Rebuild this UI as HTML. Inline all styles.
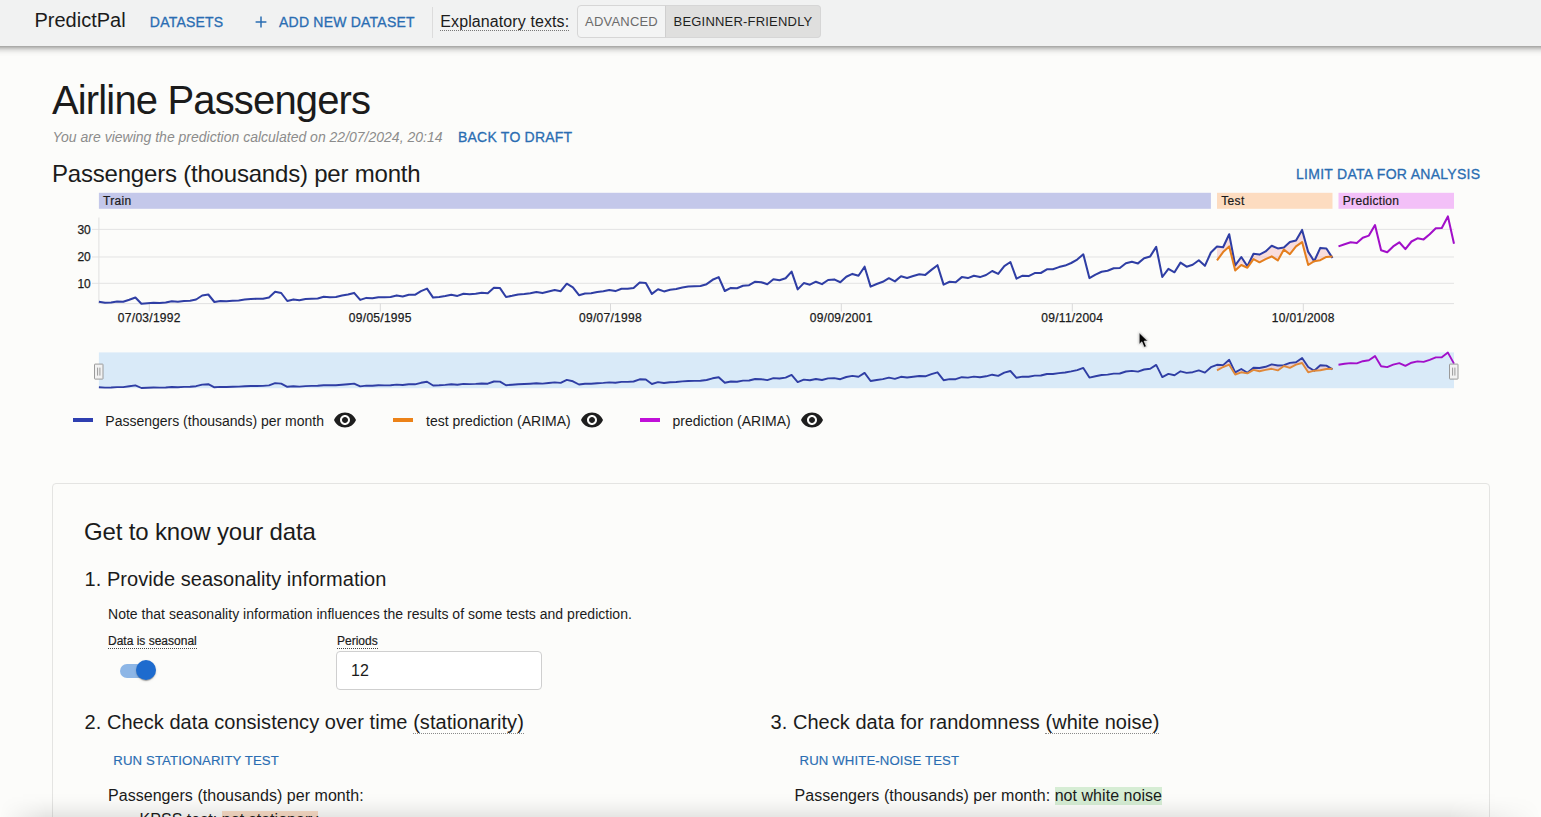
<!DOCTYPE html>
<html lang="en">
<head>
<meta charset="utf-8">
<title>PredictPal - Airline Passengers</title>
<style>
*{box-sizing:border-box;}
html,body{margin:0;padding:0;}
body{width:1541px;height:817px;overflow:hidden;position:relative;background:#fcfcfa;color:#1b1b1b;
 font-family:"Liberation Sans",Arial,Helvetica,sans-serif;}
.abs{position:absolute;white-space:nowrap;line-height:1;}
.hdr{position:absolute;left:-20px;top:0;width:1581px;height:46px;background:#f1f2f2;
 box-shadow:0 2px 4px -1px rgba(0,0,0,.30),0 4px 6px 0 rgba(0,0,0,.14),0 1px 10px 0 rgba(0,0,0,.10);z-index:5;}
.link{color:#2a6db2;-webkit-text-stroke:.3px #2a6db2;}
.brand{left:34.5px;top:10.2px;font-size:20px;color:#1b1b1b;}
.nav{font-size:14px;top:14.5px;letter-spacing:.22px;}
.divider{position:absolute;left:432px;top:7px;width:1px;height:31px;background:#dcdcdc;}
.expl{left:440.3px;top:14px;font-size:16px;letter-spacing:.1px;border-bottom:1px dotted #777;padding-bottom:0px;}
.tgl{position:absolute;top:5px;height:33px;border:1px solid #d6d6d6;font-size:13px;color:#6b6b6b;display:flex;align-items:center;justify-content:center;letter-spacing:.2px;}
.tgl.a{left:577px;width:89px;border-radius:4px 0 0 4px;background:#f3f4f4;}
.tgl.b{left:665px;width:156px;border-radius:0 4px 4px 0;background:#dfdfde;color:#1f1f1f;border-left-color:#cfcfcf;}
h1{margin:0;font-weight:400;}
.title{left:52px;top:79.6px;font-size:40px;letter-spacing:-.85px;}
.sub{left:52.5px;top:129.8px;font-size:14px;font-style:italic;color:#8c8c8c;}
.back{left:458px;top:129.8px;font-size:14px;letter-spacing:.22px;}
.ctitle{left:52px;top:161.7px;font-size:24px;letter-spacing:-.2px;}
.limit{left:1296px;top:166.75px;font-size:14px;letter-spacing:.28px;}
.chart{position:absolute;left:0;top:0;}
.chart text{font-family:"Liberation Sans",Arial,sans-serif;fill:#1b1b1b;}
.chart .tick{font-size:12px;stroke:#1b1b1b;stroke-width:.25px;}
.chart .bandtxt text{font-size:12px;stroke:#1b1b1b;stroke-width:.2px;letter-spacing:.32px;}
.leg{top:413.5px;font-size:14px;}
.sw{position:absolute;top:418.2px;width:20px;height:3.6px;}
.eyew{position:absolute;top:408px;width:24px;height:24px;display:block;}
.eye{display:block;}
.card{position:absolute;left:52px;top:483px;width:1438px;height:400px;border:1px solid #e4e4e2;border-radius:4px;background:#fcfcfa;}
.h2{left:84px;top:519.9px;font-size:24px;letter-spacing:-.15px;}
.h3{font-size:20px;letter-spacing:.05px;}
.dot{border-bottom:1px dotted #8a8a8a;}
.note{left:108px;top:607px;font-size:14px;letter-spacing:.02px;}
.lab{font-size:12px;top:635px;border-bottom:1px dotted #444;padding-bottom:1px;-webkit-text-stroke:.2px #1b1b1b;}
.track{position:absolute;left:120px;top:663.5px;width:34px;height:14px;border-radius:7px;background:#8db6e6;}
.thumb{position:absolute;left:136px;top:660px;width:20px;height:20px;border-radius:50%;background:#1e6bce;
 box-shadow:0 2px 1px -1px rgba(0,0,0,.2),0 1px 1px 0 rgba(0,0,0,.14),0 1px 3px 0 rgba(0,0,0,.12);}
.inp{position:absolute;left:336px;top:651px;width:206px;height:39px;border:1px solid #cfcfcf;border-radius:4px;background:#fff;
 font-size:16px;line-height:37.5px;padding-left:14px;}
.btn{font-size:13.2px;letter-spacing:.12px;top:754.3px;-webkit-text-stroke-width:.15px;}
.p16{font-size:16px;top:788px;letter-spacing:.04px;}
.hl{padding:0 0 1px 0;}
.bshadow{position:absolute;left:0;bottom:0;width:1541px;height:24px;background:linear-gradient(to bottom,rgba(0,0,0,0) 0%,rgba(0,0,0,.012) 30%,rgba(0,0,0,.04) 62%,rgba(0,0,0,.09) 100%);z-index:9;
 -webkit-mask-image:linear-gradient(to right,transparent 0,#000 3%,#000 94%,transparent 100%);mask-image:linear-gradient(to right,transparent 0,#000 3%,#000 94%,transparent 100%);}
</style>
</head>
<body>
<div class="hdr"><div style="position:absolute;left:20px;top:0;width:1541px;height:46px">
 <div class="abs brand">PredictPal</div>
 <div class="abs nav link" style="left:149.8px">DATASETS</div>
 <svg class="abs" style="left:253px;top:13.5px" width="16" height="16" viewBox="0 0 16 16"><path d="M8 2.6v10.8M2.6 8h10.8" stroke="#2a6db2" stroke-width="1.5" fill="none"/></svg>
 <div class="abs nav link" style="left:279px">ADD NEW DATASET</div>
 <div class="divider"></div>
 <div class="abs expl">Explanatory texts:</div>
 <div class="tgl a">ADVANCED</div>
 <div class="tgl b">BEGINNER-FRIENDLY</div>
</div></div>

<h1 class="abs title">Airline Passengers</h1>
<div class="abs sub">You are viewing the prediction calculated on 22/07/2024, 20:14</div>
<div class="abs back link">BACK TO DRAFT</div>
<div class="abs ctitle">Passengers (thousands) per month</div>
<div class="abs limit link">LIMIT DATA FOR ANALYSIS</div>

<svg class="chart" width="1541" height="460" viewBox="0 0 1541 460">
<rect x="98.9" y="192.8" width="1112.0" height="16" fill="#c4c8ea"/>
<rect x="1217.0" y="192.8" width="115.5" height="16" fill="#fddcc0"/>
<rect x="1338.5" y="192.8" width="115.5" height="16" fill="#f3c0f8"/>
<g class="bandtxt">
<text x="103" y="204.6">Train</text>
<text x="1221.3" y="204.6">Test</text>
<text x="1342.8" y="204.6">Prediction</text>
</g>
<line x1="92" x2="1454" y1="229.4" y2="229.4" stroke="#e3e3e3" stroke-width="1"/>
<text class="tick" x="90.8" y="233.6" text-anchor="end">30</text>
<line x1="92" x2="1454" y1="257.0" y2="257.0" stroke="#e3e3e3" stroke-width="1"/>
<text class="tick" x="90.8" y="261.2" text-anchor="end">20</text>
<line x1="92" x2="1454" y1="283.3" y2="283.3" stroke="#e3e3e3" stroke-width="1"/>
<text class="tick" x="90.8" y="287.5" text-anchor="end">10</text>
<line x1="98.9" x2="98.9" y1="217.5" y2="303.8" stroke="#e0e0e0" stroke-width="1"/>
<line x1="98.9" x2="1454" y1="303.6" y2="303.6" stroke="#e0e0e0" stroke-width="1"/>
<line x1="149.3" x2="149.3" y1="303.6" y2="311.5" stroke="#d9d9d9" stroke-width="1"/>
<text class="tick" x="149.3" y="321.6" text-anchor="middle" style="letter-spacing:.28px">07/03/1992</text>
<line x1="380.3" x2="380.3" y1="303.6" y2="311.5" stroke="#d9d9d9" stroke-width="1"/>
<text class="tick" x="380.3" y="321.6" text-anchor="middle" style="letter-spacing:.28px">09/05/1995</text>
<line x1="610.5" x2="610.5" y1="303.6" y2="311.5" stroke="#d9d9d9" stroke-width="1"/>
<text class="tick" x="610.5" y="321.6" text-anchor="middle" style="letter-spacing:.28px">09/07/1998</text>
<line x1="841.3" x2="841.3" y1="303.6" y2="311.5" stroke="#d9d9d9" stroke-width="1"/>
<text class="tick" x="841.3" y="321.6" text-anchor="middle" style="letter-spacing:.28px">09/09/2001</text>
<line x1="1072.3" x2="1072.3" y1="303.6" y2="311.5" stroke="#d9d9d9" stroke-width="1"/>
<text class="tick" x="1072.3" y="321.6" text-anchor="middle" style="letter-spacing:.28px">09/11/2004</text>
<line x1="1303.3" x2="1303.3" y1="303.6" y2="311.5" stroke="#d9d9d9" stroke-width="1"/>
<text class="tick" x="1303.3" y="321.6" text-anchor="middle" style="letter-spacing:.28px">10/01/2008</text>
<polygon points="1217.0,246.6 1223.1,247.3 1229.2,234.3 1235.2,265.4 1241.3,257.0 1247.4,266.3 1253.5,253.7 1259.5,254.6 1265.6,251.4 1271.7,245.7 1277.8,248.4 1283.9,247.5 1289.9,242.0 1296.0,240.5 1302.1,229.9 1308.2,251.9 1314.2,261.2 1320.3,247.9 1326.4,248.5 1332.5,258.0 1332.5,256.4 1326.4,256.9 1320.3,260.2 1314.2,261.2 1308.2,265.0 1302.1,242.1 1296.0,246.4 1289.9,254.2 1283.9,249.6 1277.8,260.4 1271.7,256.4 1265.6,259.1 1259.5,262.3 1253.5,259.1 1247.4,267.7 1241.3,265.0 1235.2,270.4 1229.2,246.4 1223.1,252.1 1217.0,260.4" fill="#f4a6a6" fill-opacity="0.36"/>
<polyline points="98.9,301.8 105.0,302.8 111.1,302.6 117.1,301.6 123.2,301.7 129.3,299.7 135.4,297.5 141.4,303.8 147.5,303.3 153.6,302.7 159.7,302.9 165.7,302.5 171.8,301.2 177.9,301.7 184.0,301.1 190.1,300.7 196.1,299.5 202.2,295.5 208.3,294.5 214.4,302.0 220.4,301.1 226.5,301.2 232.6,300.8 238.7,300.4 244.7,299.6 250.8,299.0 256.9,298.8 263.0,298.7 269.0,297.5 275.1,291.8 281.2,293.0 287.3,301.0 293.4,299.4 299.4,300.3 305.5,299.0 311.6,298.7 317.7,298.4 323.7,296.8 329.8,297.2 335.9,296.9 342.0,295.6 348.0,294.4 354.1,292.9 360.2,299.9 366.3,297.9 372.4,298.3 378.4,297.2 384.5,297.3 390.6,297.1 396.7,295.4 402.7,296.4 408.8,294.7 414.9,294.8 421.0,291.1 427.0,288.6 433.1,297.6 439.2,297.0 445.3,296.1 451.3,294.7 457.4,295.9 463.5,293.7 469.6,294.2 475.7,293.7 481.7,292.7 487.8,293.2 493.9,287.8 500.0,288.1 506.0,297.0 512.1,295.8 518.2,294.4 524.3,293.9 530.3,293.2 536.4,292.1 542.5,293.1 548.6,291.6 554.7,290.0 560.7,291.2 566.8,283.7 572.9,287.3 579.0,295.2 585.0,293.5 591.1,293.2 597.2,292.1 603.3,291.2 609.3,290.0 615.4,291.1 621.5,288.7 627.6,288.8 633.6,287.9 639.7,282.5 645.8,282.9 651.9,293.9 658.0,289.3 664.0,291.4 670.1,289.7 676.2,289.1 682.3,287.5 688.3,286.6 694.4,286.3 700.5,286.1 706.6,284.2 712.6,279.8 718.7,277.1 724.8,291.0 730.9,287.9 737.0,288.2 743.0,285.7 749.1,285.2 755.2,281.7 761.3,282.2 767.3,284.3 773.4,279.3 779.5,280.3 785.6,278.3 791.6,271.6 797.7,289.4 803.8,283.1 809.9,284.7 815.9,281.7 822.0,284.1 828.1,280.0 834.2,279.4 840.3,282.2 846.3,276.7 852.4,273.9 858.5,275.8 864.6,266.7 870.6,286.6 876.7,284.0 882.8,281.8 888.9,278.2 894.9,281.4 901.0,276.2 907.1,278.0 913.2,276.1 919.3,274.2 925.3,274.9 931.4,269.9 937.5,265.2 943.6,284.6 949.6,281.8 955.7,282.2 961.8,277.1 967.9,278.1 973.9,275.7 980.0,277.1 986.1,275.0 992.2,271.0 998.2,273.9 1004.3,266.1 1010.4,262.0 1016.5,278.7 1022.6,275.7 1028.6,276.1 1034.7,273.1 1040.8,273.0 1046.9,269.3 1052.9,269.2 1059.0,267.1 1065.1,265.6 1071.2,263.0 1077.2,259.6 1083.3,254.3 1089.4,278.1 1095.5,274.6 1101.6,271.7 1107.6,270.8 1113.7,268.3 1119.8,268.0 1125.9,263.2 1131.9,261.7 1138.0,263.4 1144.1,258.3 1150.2,256.4 1156.2,246.9 1162.3,277.0 1168.4,268.9 1174.5,272.3 1180.5,262.6 1186.6,266.7 1192.7,264.8 1198.8,260.3 1204.9,265.8 1210.9,252.5 1217.0,246.6 1223.1,247.3 1229.2,234.3 1235.2,265.4 1241.3,257.0 1247.4,266.3 1253.5,253.7 1259.5,254.6 1265.6,251.4 1271.7,245.7 1277.8,248.4 1283.9,247.5 1289.9,242.0 1296.0,240.5 1302.1,229.9 1308.2,251.9 1314.2,261.2 1320.3,247.9 1326.4,248.5 1332.5,258.0" fill="none" stroke="#2f3ea4" stroke-width="2.05" stroke-linejoin="round"/>
<polyline points="1217.0,260.4 1223.1,252.1 1229.2,246.4 1235.2,270.4 1241.3,265.0 1247.4,267.7 1253.5,259.1 1259.5,262.3 1265.6,259.1 1271.7,256.4 1277.8,260.4 1283.9,249.6 1289.9,254.2 1296.0,246.4 1302.1,242.1 1308.2,265.0 1314.2,261.2 1320.3,260.2 1326.4,256.9 1332.5,256.4" fill="none" stroke="#e47f1e" stroke-width="2.05" stroke-linejoin="round"/>
<polyline points="1338.5,246.4 1344.6,244.2 1350.7,242.3 1356.8,243.1 1362.8,237.7 1368.9,235.6 1375.0,225.1 1381.1,250.2 1387.2,252.3 1393.2,246.4 1399.3,242.3 1405.4,249.1 1411.5,241.5 1417.5,238.3 1423.6,239.4 1429.7,234.2 1435.8,228.3 1441.8,228.0 1447.9,216.4 1454.0,243.7" fill="none" stroke="#a20fc9" stroke-width="2.05" stroke-linejoin="round"/>
<rect x="98.9" y="352.4" width="1355.1" height="35.8" fill="#d9eaf8"/>
<polygon points="1217.0,364.8 1223.1,365.1 1229.2,359.8 1235.2,372.4 1241.3,369.0 1247.4,372.8 1253.5,367.7 1259.5,368.0 1265.6,366.8 1271.7,364.4 1277.8,365.5 1283.9,365.2 1289.9,362.9 1296.0,362.3 1302.1,358.0 1308.2,367.0 1314.2,370.7 1320.3,365.3 1326.4,365.6 1332.5,369.4 1332.5,368.8 1326.4,369.0 1320.3,370.3 1314.2,370.7 1308.2,372.3 1302.1,363.0 1296.0,364.7 1289.9,367.9 1283.9,366.0 1277.8,370.4 1271.7,368.8 1265.6,369.9 1259.5,371.2 1253.5,369.9 1247.4,373.4 1241.3,372.3 1235.2,374.5 1229.2,364.7 1223.1,367.0 1217.0,370.4" fill="#f4a6a6" fill-opacity="0.36"/>
<polyline points="98.9,387.2 105.0,387.6 111.1,387.5 117.1,387.1 123.2,387.1 129.3,386.3 135.4,385.4 141.4,388.0 147.5,387.8 153.6,387.5 159.7,387.6 165.7,387.5 171.8,387.0 177.9,387.2 184.0,386.9 190.1,386.7 196.1,386.2 202.2,384.6 208.3,384.2 214.4,387.3 220.4,386.9 226.5,387.0 232.6,386.8 238.7,386.6 244.7,386.3 250.8,386.0 256.9,386.0 263.0,385.9 269.0,385.4 275.1,383.1 281.2,383.6 287.3,386.8 293.4,386.2 299.4,386.6 305.5,386.1 311.6,385.9 317.7,385.8 323.7,385.2 329.8,385.3 335.9,385.2 342.0,384.7 348.0,384.2 354.1,383.6 360.2,386.4 366.3,385.6 372.4,385.7 378.4,385.3 384.5,385.4 390.6,385.3 396.7,384.6 402.7,385.0 408.8,384.3 414.9,384.3 421.0,382.8 427.0,381.8 433.1,385.5 439.2,385.3 445.3,384.9 451.3,384.3 457.4,384.8 463.5,383.9 469.6,384.1 475.7,383.9 481.7,383.5 487.8,383.7 493.9,381.5 500.0,381.6 506.0,385.2 512.1,384.7 518.2,384.2 524.3,384.0 530.3,383.7 536.4,383.3 542.5,383.6 548.6,383.0 554.7,382.4 560.7,382.9 566.8,379.9 572.9,381.3 579.0,384.5 585.0,383.8 591.1,383.7 597.2,383.2 603.3,382.9 609.3,382.4 615.4,382.8 621.5,381.9 627.6,381.9 633.6,381.5 639.7,379.3 645.8,379.5 651.9,384.0 658.0,382.1 664.0,383.0 670.1,382.3 676.2,382.0 682.3,381.4 688.3,381.0 694.4,380.9 700.5,380.8 706.6,380.0 712.6,378.3 718.7,377.2 724.8,382.8 730.9,381.5 737.0,381.7 743.0,380.6 749.1,380.5 755.2,379.0 761.3,379.2 767.3,380.1 773.4,378.1 779.5,378.5 785.6,377.6 791.6,374.9 797.7,382.1 803.8,379.6 809.9,380.2 815.9,379.0 822.0,380.0 828.1,378.4 834.2,378.1 840.3,379.2 846.3,377.0 852.4,375.9 858.5,376.7 864.6,372.9 870.6,381.0 876.7,380.0 882.8,379.1 888.9,377.6 894.9,378.9 901.0,376.8 907.1,377.5 913.2,376.8 919.3,376.0 925.3,376.3 931.4,374.2 937.5,372.3 943.6,380.2 949.6,379.1 955.7,379.2 961.8,377.2 967.9,377.6 973.9,376.6 980.0,377.2 986.1,376.3 992.2,374.7 998.2,375.9 1004.3,372.7 1010.4,371.0 1016.5,377.8 1022.6,376.6 1028.6,376.7 1034.7,375.6 1040.8,375.5 1046.9,374.0 1052.9,374.0 1059.0,373.1 1065.1,372.5 1071.2,371.4 1077.2,370.1 1083.3,367.9 1089.4,377.6 1095.5,376.2 1101.6,375.0 1107.6,374.6 1113.7,373.6 1119.8,373.5 1125.9,371.5 1131.9,370.9 1138.0,371.6 1144.1,369.5 1150.2,368.8 1156.2,364.9 1162.3,377.1 1168.4,373.9 1174.5,375.2 1180.5,371.3 1186.6,372.9 1192.7,372.2 1198.8,370.4 1204.9,372.6 1210.9,367.2 1217.0,364.8 1223.1,365.1 1229.2,359.8 1235.2,372.4 1241.3,369.0 1247.4,372.8 1253.5,367.7 1259.5,368.0 1265.6,366.8 1271.7,364.4 1277.8,365.5 1283.9,365.2 1289.9,362.9 1296.0,362.3 1302.1,358.0 1308.2,367.0 1314.2,370.7 1320.3,365.3 1326.4,365.6 1332.5,369.4" fill="none" stroke="#2f3ea4" stroke-width="1.9" stroke-linejoin="round"/>
<polyline points="1217.0,370.4 1223.1,367.0 1229.2,364.7 1235.2,374.5 1241.3,372.3 1247.4,373.4 1253.5,369.9 1259.5,371.2 1265.6,369.9 1271.7,368.8 1277.8,370.4 1283.9,366.0 1289.9,367.9 1296.0,364.7 1302.1,363.0 1308.2,372.3 1314.2,370.7 1320.3,370.3 1326.4,369.0 1332.5,368.8" fill="none" stroke="#e0893a" stroke-width="1.9" stroke-linejoin="round"/>
<polyline points="1338.5,364.7 1344.6,363.8 1350.7,363.1 1356.8,363.4 1362.8,361.2 1368.9,360.3 1375.0,356.1 1381.1,366.2 1387.2,367.1 1393.2,364.7 1399.3,363.1 1405.4,365.8 1411.5,362.7 1417.5,361.4 1423.6,361.9 1429.7,359.8 1435.8,357.4 1441.8,357.3 1447.9,352.6 1454.0,363.6" fill="none" stroke="#a20fc9" stroke-width="1.9" stroke-linejoin="round"/>
<g transform="translate(94.0,363.6)"><rect x="0.5" y="0.5" width="8.5" height="15" rx="0.5" fill="#f2f2f2" stroke="#9a9a9a" stroke-width="1"/><line x1="3.6" x2="3.6" y1="4" y2="12" stroke="#9a9a9a" stroke-width="1"/><line x1="5.9" x2="5.9" y1="4" y2="12" stroke="#9a9a9a" stroke-width="1"/></g>
<g transform="translate(1449.0,363.6)"><rect x="0.5" y="0.5" width="8.5" height="15" rx="0.5" fill="#f2f2f2" stroke="#9a9a9a" stroke-width="1"/><line x1="3.6" x2="3.6" y1="4" y2="12" stroke="#9a9a9a" stroke-width="1"/><line x1="5.9" x2="5.9" y1="4" y2="12" stroke="#9a9a9a" stroke-width="1"/></g>
</svg>

<div class="sw" style="left:73px;background:#2e3fb0"></div>
<div class="abs leg" style="left:105.3px">Passengers (thousands) per month</div>
<span style="left:333px" class="eyew"><svg class="eye" width="24" height="24" viewBox="0 0 24 24"><path fill="#1e1e1e" d="M12 4.5C7 4.5 2.73 7.61 1 12c1.73 4.39 6 7.500 11 7.500s9.270-3.110 11-7.500c-1.730-4.390-6-7.500-11-7.500zM12 17c-2.760 0-5-2.240-5-5s2.240-5 5-5 5 2.240 5 5-2.240 5-5 5zm0-8c-1.660 0-3 1.340-3 3s1.340 3 3 3 3-1.340 3-3-1.340-3-3-3z"/></svg></span>
<div class="sw" style="left:393.2px;background:#ec8218"></div>
<div class="abs leg" style="left:426px">test prediction (ARIMA)</div>
<span style="left:579.5px" class="eyew"><svg class="eye" width="24" height="24" viewBox="0 0 24 24"><path fill="#1e1e1e" d="M12 4.5C7 4.5 2.73 7.61 1 12c1.73 4.39 6 7.500 11 7.500s9.270-3.110 11-7.500c-1.730-4.390-6-7.500-11-7.500zM12 17c-2.760 0-5-2.240-5-5s2.240-5 5-5 5 2.240 5 5-2.240 5-5 5zm0-8c-1.660 0-3 1.340-3 3s1.340 3 3 3 3-1.340 3-3-1.340-3-3-3z"/></svg></span>
<div class="sw" style="left:640px;background:#c010d8"></div>
<div class="abs leg" style="left:672.5px">prediction (ARIMA)</div>
<span style="left:799.5px" class="eyew"><svg class="eye" width="24" height="24" viewBox="0 0 24 24"><path fill="#1e1e1e" d="M12 4.5C7 4.5 2.73 7.61 1 12c1.73 4.39 6 7.500 11 7.500s9.270-3.110 11-7.500c-1.730-4.390-6-7.500-11-7.500zM12 17c-2.760 0-5-2.240-5-5s2.240-5 5-5 5 2.240 5 5-2.240 5-5 5zm0-8c-1.660 0-3 1.340-3 3s1.340 3 3 3 3-1.340 3-3-1.340-3-3-3z"/></svg></span>

<svg class="abs" style="left:1136px;top:330px;z-index:8" width="16" height="20" viewBox="0 0 16 20"><path d="M3.20 2.70 L3.20 14.28 L5.89 11.83 L8.11 17.32 L10.34 16.39 L8.11 11.12 L11.74 11.01 Z" fill="#050505" stroke="#fff" stroke-width="0.6" stroke-linejoin="round" style="filter:drop-shadow(0 .6px .8px rgba(0,0,0,.35))"/></svg>
<div class="card"></div>
<div class="abs h2">Get to know your data</div>
<div class="abs h3" style="left:84.5px;top:569px">1. Provide seasonality information</div>
<div class="abs note">Note that seasonality information influences the results of some tests and prediction.</div>
<div class="abs lab" style="left:108px">Data is seasonal</div>
<div class="track"></div><div class="thumb"></div>
<div class="abs lab" style="left:337px">Periods</div>
<div class="inp">12</div>

<div class="abs h3" style="left:84.5px;top:712px">2. Check data consistency over time <span class="dot">(stationarity)</span></div>
<div class="abs btn link" style="left:113.3px">RUN STATIONARITY TEST</div>
<div class="abs p16" style="left:108px">Passengers (thousands) per month:</div>
<div class="abs p16" style="left:139.5px;top:812.4px">KPSS test: <span class="hl" style="background:#f9dcc6">not stationary</span></div>

<div class="abs h3" style="left:770.5px;top:712px">3. Check data for randomness <span class="dot">(white noise)</span></div>
<div class="abs btn link" style="left:799.5px">RUN WHITE-NOISE TEST</div>
<div class="abs p16" style="left:794.5px">Passengers (thousands) per month: <span class="hl" style="background:#d6edd4">not white noise</span></div>

<div class="bshadow"></div>
</body>
</html>
